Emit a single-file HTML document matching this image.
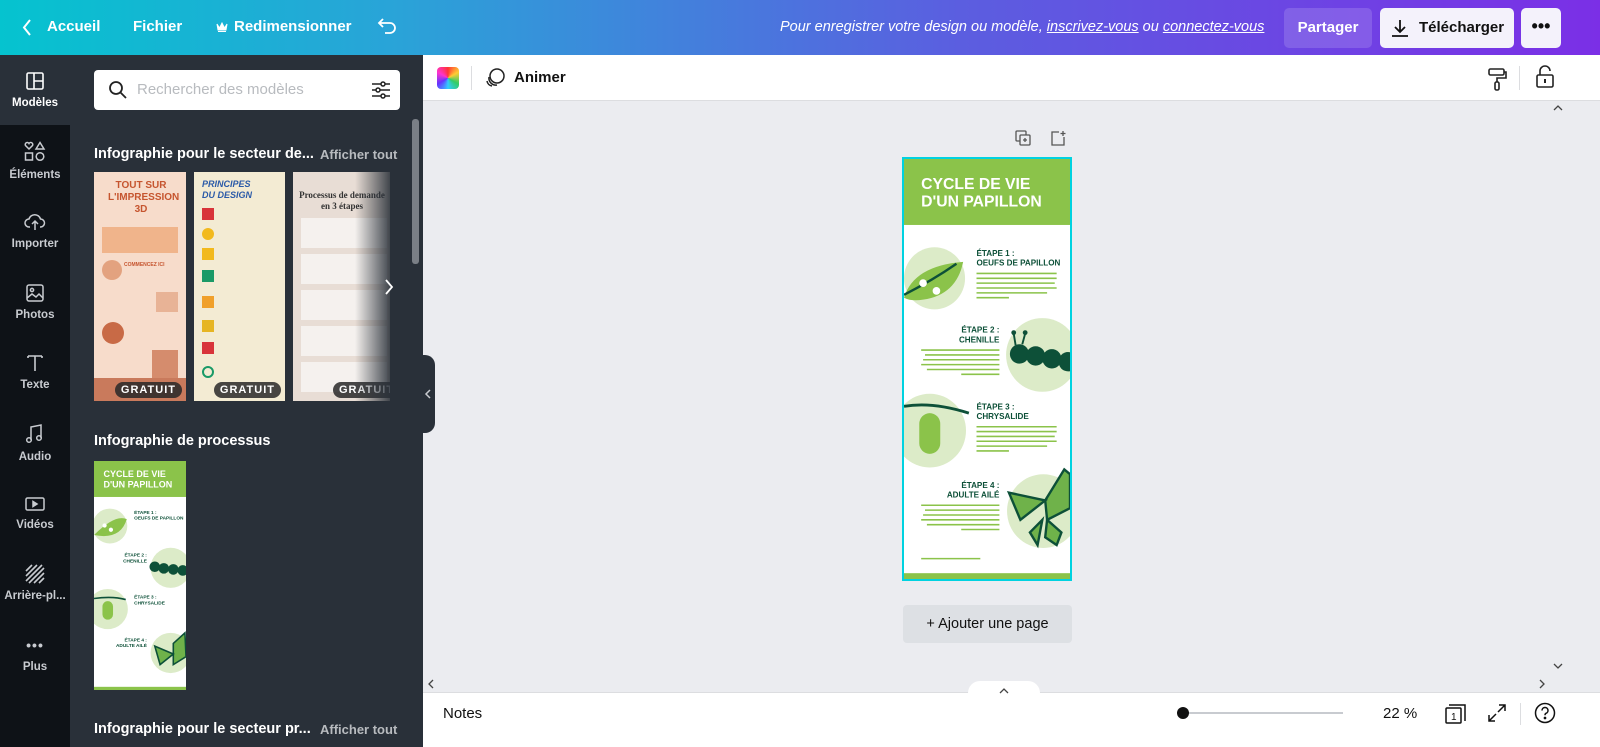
<!DOCTYPE html>
<html><head><meta charset="utf-8">
<style>
*{margin:0;padding:0;box-sizing:border-box}
body{width:1600px;height:747px;overflow:hidden;font-family:"Liberation Sans",sans-serif;background:#ebecf0;position:relative}
.abs{position:absolute}
#top{left:0;top:0;width:1600px;height:55px;background:linear-gradient(90deg,#05c3cf 0%,#2aa3d8 25%,#5b5ee0 60%,#7b2fe6 100%);color:#fff}
#top .t{position:absolute;top:18px;font-size:15px;font-weight:bold}
#rail{left:0;top:55px;width:70px;height:692px;background:#0e1217}
#panel{left:70px;top:55px;width:353px;height:692px;background:#293039}
.ri{position:absolute;left:0;width:70px;text-align:center;color:#c8cbd0;font-size:11.5px;font-weight:bold}
.ri svg{display:block;margin:0 auto 6px}
#toolbar{left:423px;top:55px;width:1177px;height:46px;background:#fff;border-bottom:1px solid #dcdde0}
#bottom{left:423px;top:692px;width:1177px;height:55px;background:#fff;border-top:1px solid #dcdde0}
.card{position:absolute;top:172px;height:229px;overflow:hidden}
.badge{position:absolute;bottom:3px;background:rgba(40,40,40,.85);color:#fff;font-size:11px;font-weight:bold;letter-spacing:1px;padding:2px 6px;border-radius:8px}
.line{position:absolute;height:2px;border-radius:1px}
</style></head><body>

<div id="top" class="abs">
  <svg class="abs" style="left:22px;top:19px" width="10" height="17" viewBox="0 0 10 17"><path d="M8 1L2 8.5L8 16" stroke="#fff" stroke-width="2" fill="none"/></svg>
  <span class="t" style="left:47px">Accueil</span>
  <span class="t" style="left:133px">Fichier</span>
  <svg class="abs" style="left:216px;top:22px" width="12" height="11" viewBox="0 0 12 11"><path d="M1 2L3.5 6L6 1L8.5 6L11 2L10 8H2Z M2 9.5H10" fill="#fff" stroke="#fff" stroke-width="1"/></svg>
  <span class="t" style="left:234px">Redimensionner</span>
  <svg class="abs" style="left:377px;top:17px" width="20" height="18" viewBox="0 0 20 18"><path d="M6 2L2 6L6 10 M2 6H13a5 5 0 0 1 0 10H8" stroke="#fff" stroke-width="1.8" fill="none"/></svg>
  <span class="abs" style="left:780px;top:19px;font-size:14.5px;font-style:italic;">Pour enregistrer votre design ou modèle, <u>inscrivez-vous</u> ou <u>connectez-vous</u></span>
  <div class="abs" style="left:1284px;top:8px;width:88px;height:40px;background:rgba(255,255,255,.15);border-radius:5px;font-size:15px;font-weight:bold;text-align:center;line-height:40px">Partager</div>
  <div class="abs" style="left:1380px;top:8px;width:134px;height:40px;background:#f4f2fb;border-radius:5px;color:#111;font-size:15px;font-weight:bold;line-height:40px;padding-left:39px">Télécharger
    <svg class="abs" style="left:10px;top:10px" width="20" height="20" viewBox="0 0 20 20"><path d="M10 2V14 M5 9L10 14L15 9 M2 18H18" stroke="#111" stroke-width="1.8" fill="none"/></svg></div>
  <div class="abs" style="left:1521px;top:8px;width:40px;height:40px;background:#f4f2fb;border-radius:5px;color:#111;font-size:18px;font-weight:bold;text-align:center;line-height:36px">•••</div>
</div>

<div id="rail" class="abs">
  <div class="abs" style="left:0;top:0;width:70px;height:70px;background:#293039"></div>
  <div class="ri" style="top:16px;color:#fff"><svg width="20" height="20" viewBox="0 0 20 20"><rect x="2" y="2" width="16" height="16" rx="1.5" fill="none" stroke="#fff" stroke-width="1.6"/><path d="M9 2V18 M9 10H18" stroke="#fff" stroke-width="1.6"/></svg>Modèles</div>
  <div class="ri" style="top:86px"><svg width="22" height="22" viewBox="0 0 22 22" fill="none" stroke="#c8cbd0" stroke-width="1.5"><path d="M5 8L1.5 4.5a2 2 0 0 1 3.5-2a2 2 0 0 1 3.5 2Z"/><path d="M16 1.5L20 8H12Z"/><rect x="1.5" y="12" width="7" height="7"/><circle cx="16" cy="15.5" r="3.8"/></svg>Éléments</div>
  <div class="ri" style="top:157px"><svg width="22" height="20" viewBox="0 0 22 20" fill="none" stroke="#c8cbd0" stroke-width="1.5"><path d="M6 15H5a4 4 0 0 1 0-8a6 6 0 0 1 11.5 0a4 4 0 0 1 0 8H16 M11 9V18 M8 12L11 9L14 12"/></svg>Importer</div>
  <div class="ri" style="top:228px"><svg width="20" height="20" viewBox="0 0 20 20" fill="none" stroke="#c8cbd0" stroke-width="1.5"><rect x="2" y="2" width="16" height="16" rx="2"/><circle cx="7" cy="7" r="1.6"/><path d="M2 15L7 11L11 14L14 11L18 15"/></svg>Photos</div>
  <div class="ri" style="top:298px"><svg width="20" height="20" viewBox="0 0 20 20" fill="none" stroke="#c8cbd0" stroke-width="1.6"><path d="M3 3H17 M10 3V18 M3 3V5 M17 3V5"/></svg>Texte</div>
  <div class="ri" style="top:368px"><svg width="20" height="22" viewBox="0 0 20 22" fill="none" stroke="#c8cbd0" stroke-width="1.5"><path d="M6 17V4L16 2V15"/><circle cx="4" cy="17" r="2.3"/><circle cx="14" cy="15" r="2.3"/></svg>Audio</div>
  <div class="ri" style="top:440px"><svg width="22" height="18" viewBox="0 0 22 18" fill="none" stroke="#c8cbd0" stroke-width="1.5"><rect x="2" y="3" width="18" height="12" rx="1.5"/><path d="M9 6.5V11.5L13 9Z" fill="#c8cbd0"/></svg>Vidéos</div>
  <div class="ri" style="top:509px"><svg width="20" height="20" viewBox="0 0 20 20" stroke="#c8cbd0" stroke-width="1.6"><path d="M1 7L7 1 M1 12L12 1 M1 17L17 1 M4 19L19 4 M9 19L19 9 M14 19L19 14"/></svg>Arrière-pl...</div>
  <div class="ri" style="top:582px"><div style="font-size:14px;letter-spacing:1px;margin-bottom:8px">•••</div>Plus</div>
</div>

<div id="panel" class="abs">
  <div class="abs" style="left:24px;top:15px;width:306px;height:40px;background:#fff;border-radius:4px">
    <svg class="abs" style="left:14px;top:10px" width="20" height="20" viewBox="0 0 20 20" fill="none" stroke="#222" stroke-width="1.8"><circle cx="8" cy="8" r="6"/><path d="M12.5 12.5L18 18"/></svg>
    <span class="abs" style="left:43px;top:11px;font-size:15px;color:#b8bbbf">Rechercher des modèles</span>
    <svg class="abs" style="left:277px;top:10px" width="20" height="20" viewBox="0 0 20 20" fill="none" stroke="#222" stroke-width="1.5"><path d="M1 4H19 M1 10H19 M1 16H19"/><circle cx="12" cy="4" r="2" fill="#fff"/><circle cx="7" cy="10" r="2" fill="#fff"/><circle cx="12" cy="16" r="2" fill="#fff"/></svg>
  </div>
  <div class="abs" style="left:342px;top:64px;width:7px;height:145px;background:#7a7f86;border-radius:3px"></div>
  <span class="abs" style="left:24px;top:91px;color:#fff;font-size:14.5px;font-weight:bold">Infographie pour le secteur de...</span>
  <span class="abs" style="left:250px;top:92px;color:#b8bbbf;font-size:13px;font-weight:bold">Afficher tout</span>
  <span class="abs" style="left:24px;top:378px;color:#fff;font-size:14.5px;font-weight:bold">Infographie de processus</span>
  <span class="abs" style="left:24px;top:666px;color:#fff;font-size:14.5px;font-weight:bold">Infographie pour le secteur pr...</span>
  <span class="abs" style="left:250px;top:667px;color:#b8bbbf;font-size:13px;font-weight:bold">Afficher tout</span>
</div>

<!-- cards -->
<div class="card" style="left:94px;width:92px;background:#f7dccb">
  <div class="abs" style="left:14px;top:8px;width:66px;color:#c6552f;font-size:10px;font-weight:bold;text-align:center;line-height:12px">TOUT SUR L'IMPRESSION 3D</div>
  <div class="abs" style="left:8px;top:55px;width:76px;height:26px;background:#f0b48b"></div>
  <div class="abs" style="left:8px;top:88px;width:20px;height:20px;border-radius:50%;background:#e3a27f"></div>
  <div class="abs" style="left:30px;top:90px;color:#c6552f;font-size:5px;font-weight:bold">COMMENCEZ ICI</div>
  <div class="abs" style="left:62px;top:120px;width:22px;height:20px;background:#e8b396"></div>
  <div class="abs" style="left:8px;top:150px;width:22px;height:22px;border-radius:50%;background:#c86a46"></div>
  <div class="abs" style="left:58px;top:178px;width:26px;height:30px;background:#d58c6d"></div>
  <div class="abs" style="left:0;top:206px;width:92px;height:23px;background:#c97a5c"></div>
  <div class="badge" style="right:4px">GRATUIT</div>
</div>
<div class="card" style="left:194px;width:91px;background:#f3ebd3">
  <div class="abs" style="left:8px;top:7px;color:#2a5aa8;font-size:9px;font-weight:bold;font-style:italic;line-height:11px">PRINCIPES<br>DU DESIGN</div>
  <div class="abs" style="left:8px;top:36px;width:12px;height:12px;background:#d8343a"></div>
  <div class="abs" style="left:8px;top:56px;width:12px;height:12px;border-radius:50%;background:#f2b91d"></div>
  <div class="abs" style="left:8px;top:76px;width:12px;height:12px;background:#f2b91d"></div>
  <div class="abs" style="left:8px;top:98px;width:12px;height:12px;background:#1a9a67"></div>
  <div class="abs" style="left:8px;top:124px;width:12px;height:12px;background:#f0a02a"></div>
  <div class="abs" style="left:8px;top:148px;width:12px;height:12px;background:#e6b524"></div>
  <div class="abs" style="left:8px;top:170px;width:12px;height:12px;background:#d8343a"></div>
  <div class="abs" style="left:8px;top:194px;width:12px;height:12px;border-radius:50%;border:2px solid #1a9a67"></div>
  <div class="badge" style="right:4px">GRATUIT</div>
</div>
<div class="card" style="left:293px;width:97px;background:#e8ddd5">
  <div class="abs" style="left:5px;top:18px;width:88px;color:#333;font-size:9px;font-family:'Liberation Serif',serif;font-weight:bold;text-align:center;line-height:11px">Processus de demande en 3 étapes</div>
  <div class="abs" style="left:8px;top:46px;width:86px;height:30px;background:#f5f1ee"></div>
  <div class="abs" style="left:8px;top:82px;width:86px;height:30px;background:#f5f1ee"></div>
  <div class="abs" style="left:8px;top:118px;width:86px;height:30px;background:#f5f1ee"></div>
  <div class="abs" style="left:8px;top:154px;width:86px;height:30px;background:#f5f1ee"></div>
  <div class="abs" style="left:8px;top:190px;width:86px;height:30px;background:#f5f1ee"></div>
  <div class="badge" style="left:40px">GRATUIT</div>
</div>
<div class="abs" style="left:355px;top:172px;width:40px;height:229px;background:linear-gradient(90deg,rgba(41,48,57,0),#293039)"></div>
<svg class="abs" style="left:384px;top:279px" width="10" height="16" viewBox="0 0 10 16"><path d="M2 1L8 8L2 15" stroke="#fff" stroke-width="1.8" fill="none"/></svg>

<!-- small design thumbnail -->
<svg class="abs" style="left:94px;top:461px" width="92" height="229" viewBox="0 0 174 433" preserveAspectRatio="none">
<rect width="174" height="433" fill="#fff"/><rect width="174" height="68" fill="#8bc34a"/>
<text x="18" y="30" font-family="Liberation Sans" font-weight="bold" font-size="17" fill="#fff">CYCLE DE VIE</text>
<text x="18" y="50" font-family="Liberation Sans" font-weight="bold" font-size="17" fill="#fff">D'UN PAPILLON</text>
<circle cx="30" cy="123" r="33" fill="#dcebc8"/><circle cx="145" cy="202" r="38" fill="#dcebc8"/><circle cx="26" cy="280" r="38" fill="#dcebc8"/><circle cx="145" cy="363" r="38" fill="#dcebc8"/>
<path d="M0 140Q40 100 62 110Q50 150 0 140Z" fill="#8bc34a"/><circle cx="20" cy="122" r="4" fill="#fff"/><circle cx="32" cy="130" r="4" fill="#fff"/>
<g fill="#0d5038"><circle cx="115" cy="200" r="10"/><circle cx="132" cy="203" r="10"/><circle cx="150" cy="205" r="10"/><circle cx="168" cy="207" r="10"/></g>
<rect x="16" y="265" width="20" height="35" rx="10" fill="#8bc34a"/><path d="M0 260Q35 255 60 262" stroke="#0d5038" stroke-width="3" fill="none"/>
<path d="M150 345L172 325L174 370L150 385Z M150 365L115 350L125 385Z" fill="#6fb24a" stroke="#0d5038" stroke-width="3"/>
<g font-family="Liberation Sans" font-weight="bold" font-size="9" fill="#0d5038"><text x="76" y="100">ÉTAPE 1 :</text><text x="76" y="111">OEUFS DE PAPILLON</text><text x="100" y="181" text-anchor="end">ÉTAPE 2 :</text><text x="100" y="192" text-anchor="end">CHENILLE</text><text x="76" y="260">ÉTAPE 3 :</text><text x="76" y="271">CHRYSALIDE</text><text x="100" y="341" text-anchor="end">ÉTAPE 4 :</text><text x="100" y="352" text-anchor="end">ADULTE AILÉ</text></g>
<rect x="0" y="427" width="174" height="6" fill="#8bc34a"/>
</svg>

<!-- collapse tab -->
<div class="abs" style="left:423px;top:355px;width:12px;height:78px;background:#293039;border-radius:0 10px 10px 0"></div>
<svg class="abs" style="left:424px;top:389px" width="8" height="10" viewBox="0 0 8 10"><path d="M6 1L2 5L6 9" stroke="#c8cbd0" stroke-width="1.5" fill="none"/></svg>

<div id="toolbar" class="abs">
  <div class="abs" style="left:14px;top:12px;width:22px;height:22px;border-radius:4px;background:conic-gradient(#f33,#fc3,#3c6,#3cf,#63f,#f3c,#f33)"></div>
  <div class="abs" style="left:48px;top:11px;width:1px;height:24px;background:#dcdde0"></div>
  <svg class="abs" style="left:61px;top:12px" width="22" height="22" viewBox="0 0 22 22" fill="none" stroke="#222" stroke-width="1.5"><circle cx="13" cy="9" r="7"/><path d="M5 10a7 7 0 0 0 8 8 M3 14a6 6 0 0 0 5 5"/></svg>
  <span class="abs" style="left:91px;top:14px;font-size:15px;font-weight:bold;color:#111">Animer</span>
  <svg class="abs" style="left:1063px;top:12px" width="22" height="24" viewBox="0 0 22 24" fill="none" stroke="#222" stroke-width="1.6"><rect x="3" y="2" width="15" height="6" rx="1.5"/><path d="M18 5H20V11H11V15"/><rect x="9" y="15" width="4" height="8" rx="1.5"/></svg>
  <div class="abs" style="left:1096px;top:11px;width:1px;height:24px;background:#dcdde0"></div>
  <svg class="abs" style="left:1112px;top:10px" width="20" height="24" viewBox="0 0 20 24" fill="none" stroke="#222" stroke-width="1.6"><rect x="2" y="10" width="16" height="12" rx="1.5"/><path d="M5 10V6a5 5 0 0 1 10 0"/><path d="M10 14V18" stroke-width="2"/></svg>
</div>

<!-- canvas -->
<svg class="abs" style="left:1015px;top:130px" width="16" height="16" viewBox="0 0 16 16" fill="none" stroke="#555" stroke-width="1.3"><rect x="1" y="1" width="10" height="10" rx="1"/><rect x="5" y="5" width="10" height="10" rx="1" fill="#ebecf0"/><path d="M10 8V12 M8 10H12"/></svg>
<svg class="abs" style="left:1050px;top:130px" width="16" height="16" viewBox="0 0 16 16" fill="none" stroke="#555" stroke-width="1.3"><path d="M9 2H2V15H14V7 M13 1V6 M10.5 3.5H15.5"/></svg>

<svg class="abs" style="left:902px;top:157px;border:2px solid #00d2e0" width="170" height="424" viewBox="0 0 174 433" preserveAspectRatio="none">
<rect width="174" height="433" fill="#fff"/><rect width="174" height="68" fill="#8bc34a"/>
<text x="18" y="31" font-family="Liberation Sans" font-weight="bold" font-size="16.5" fill="#fff">CYCLE DE VIE</text>
<text x="18" y="49" font-family="Liberation Sans" font-weight="bold" font-size="16.5" fill="#fff">D'UN PAPILLON</text>
<circle cx="32" cy="123" r="32" fill="#dcebc8"/><circle cx="145" cy="202" r="38" fill="#dcebc8"/><circle cx="27" cy="280" r="38" fill="#dcebc8"/><circle cx="146" cy="363" r="38" fill="#dcebc8"/>
<path d="M0 143Q10 110 62 106Q55 140 20 145Q8 147 0 143Z" fill="#8bc34a"/><path d="M0 140Q30 125 55 108" stroke="#0d5038" stroke-width="2.5" fill="none"/><circle cx="20" cy="128" r="4" fill="#fff"/><circle cx="34" cy="136" r="4" fill="#fff"/>
<g fill="#0d5038"><circle cx="121" cy="201" r="10"/><circle cx="138" cy="203" r="10"/><circle cx="155" cy="206" r="10"/><circle cx="172" cy="209" r="10"/><path d="M117 192L115 180 M124 191L127 180" stroke="#0d5038" stroke-width="2"/><circle cx="115" cy="179" r="2.5"/><circle cx="127" cy="179" r="2.5"/></g>
<rect x="16" y="262" width="22" height="42" rx="11" fill="#8bc34a"/><path d="M0 255Q30 250 68 262" stroke="#0d5038" stroke-width="3" fill="none"/>
<g fill="#6fb24a" stroke="#0d5038" stroke-width="2.5"><path d="M148 352L168 320L174 325L174 360L150 372Z"/><path d="M148 352L110 344L122 372Z"/><path d="M150 372L165 385L160 398L148 390Z"/><path d="M145 372L132 385L140 398Z"/></g>
<g font-family="Liberation Sans" font-weight="bold" font-size="8.5" fill="#0d5038"><text x="76" y="100">ÉTAPE 1 :</text><text x="76" y="110">OEUFS DE PAPILLON</text><text x="100" y="179" text-anchor="end">ÉTAPE 2 :</text><text x="100" y="189" text-anchor="end">CHENILLE</text><text x="76" y="258">ÉTAPE 3 :</text><text x="76" y="268">CHRYSALIDE</text><text x="100" y="339" text-anchor="end">ÉTAPE 4 :</text><text x="100" y="349" text-anchor="end">ADULTE AILÉ</text></g>
<g stroke="#8bc34a" stroke-width="1.6"><path d="M76 118H160 M76 123H160 M76 128H158 M76 133H160 M76 138H150 M76 143H110"/><path d="M18 197H100 M22 202H100 M20 207H100 M18 212H100 M24 217H100 M60 222H100"/><path d="M76 276H160 M76 281H160 M76 286H158 M76 291H160 M76 296H150 M76 301H110"/><path d="M18 357H100 M22 362H100 M20 367H100 M18 372H100 M24 377H100 M60 382H100"/><path d="M18 412H80"/></g>
<rect x="0" y="427" width="174" height="6" fill="#8bc34a"/>
</svg>

<div class="abs" style="left:903px;top:605px;width:169px;height:38px;background:#dde0e4;border-radius:4px;text-align:center;line-height:38px;font-size:14.5px;color:#111">+ Ajouter une page</div>

<!-- scroll arrows -->
<svg class="abs" style="left:1553px;top:104px" width="10" height="8" viewBox="0 0 10 8"><path d="M1 6L5 2L9 6" stroke="#444" stroke-width="1.3" fill="none"/></svg>
<svg class="abs" style="left:1553px;top:662px" width="10" height="8" viewBox="0 0 10 8"><path d="M1 2L5 6L9 2" stroke="#444" stroke-width="1.3" fill="none"/></svg>
<svg class="abs" style="left:427px;top:679px" width="8" height="10" viewBox="0 0 8 10"><path d="M6 1L2 5L6 9" stroke="#444" stroke-width="1.3" fill="none"/></svg>
<svg class="abs" style="left:1538px;top:679px" width="8" height="10" viewBox="0 0 8 10"><path d="M2 1L6 5L2 9" stroke="#444" stroke-width="1.3" fill="none"/></svg>

<div id="bottom" class="abs">
  <span class="abs" style="left:20px;top:12px;font-size:15px;color:#111">Notes</span>
  <div class="abs" style="left:545px;top:-12px;width:72px;height:14px;background:#fff;border-radius:12px 12px 0 0"></div>
  <svg class="abs" style="left:576px;top:-6px" width="10" height="8" viewBox="0 0 10 8"><path d="M1 6L5 2L9 6" stroke="#444" stroke-width="1.3" fill="none"/></svg>
  <div class="abs" style="left:760px;top:19px;width:160px;height:2px;background:#c8cbd0"></div>
  <div class="abs" style="left:754px;top:14px;width:12px;height:12px;border-radius:50%;background:#111"></div>
  <span class="abs" style="left:960px;top:12px;font-size:15px;color:#111">22 %</span>
  <svg class="abs" style="left:1022px;top:9px" width="22" height="22" viewBox="0 0 22 22" fill="none" stroke="#111" stroke-width="1.5"><path d="M4 3H20V19"/><rect x="1" y="6" width="15" height="15" rx="1"/><text x="6" y="18" font-size="10" font-family="Liberation Sans" fill="#111" stroke="none">1</text></svg>
  <svg class="abs" style="left:1065px;top:11px" width="18" height="18" viewBox="0 0 18 18" fill="none" stroke="#111" stroke-width="1.5"><path d="M11 1H17V7 M17 1L10 8 M7 17H1V11 M1 17L8 10"/></svg>
  <div class="abs" style="left:1097px;top:10px;width:1px;height:22px;background:#dcdde0"></div>
  <svg class="abs" style="left:1111px;top:9px" width="22" height="22" viewBox="0 0 22 22" fill="none" stroke="#111" stroke-width="1.5"><circle cx="11" cy="11" r="9.5"/><path d="M8 8.5a3 3 0 1 1 4 2.8c-.8.4-1 1-1 2" /><circle cx="11" cy="16" r=".6" fill="#111"/></svg>
</div>
</body></html>
